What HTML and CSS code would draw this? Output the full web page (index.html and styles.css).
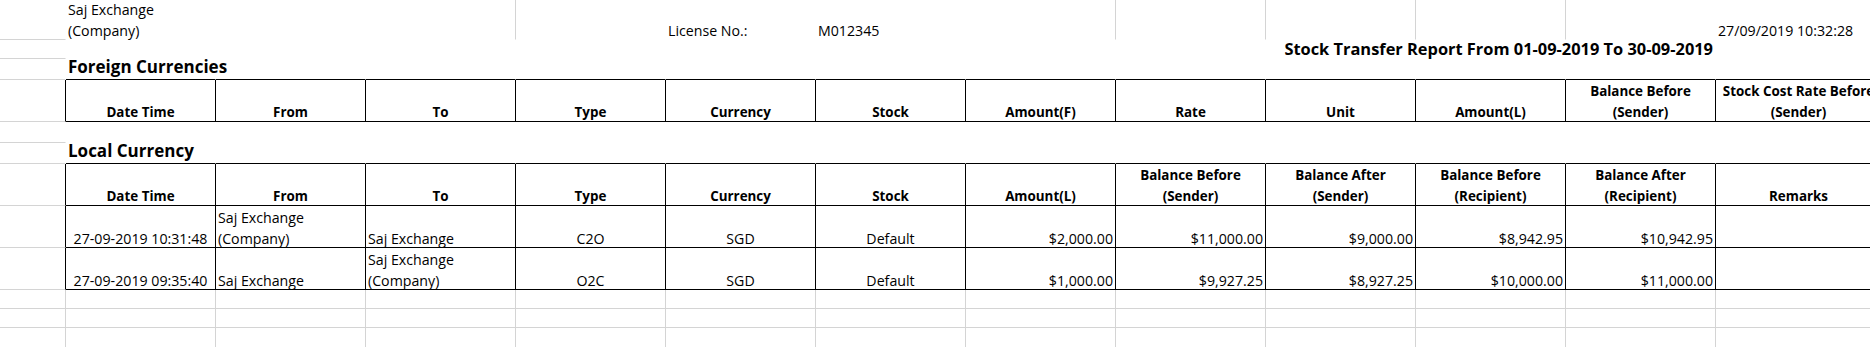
FILE: index.html
```html
<!DOCTYPE html>
<html>
<head>
<meta charset="utf-8">
<link rel="stylesheet" href="styles.css">
</head>
<body>
<div class="sheet">
  <!-- Row 1 -->
  <div class="c gb"></div>
  <div class="c span2"><span class="t">Saj Exchange<br>(Company)</span></div>
  <div class="c gr"></div>
  <div class="c"></div>
  <div class="c"><span class="t">License No.:</span></div>
  <div class="c"><span class="t">M012345</span></div>
  <div class="c gr"></div>
  <div class="c gr"></div>
  <div class="c gr"></div>
  <div class="c gr"></div>
  <div class="c"></div>
  <div class="c"><span class="t">27/09/2019 10:32:28</span></div>

  <!-- Row 2 -->
  <div class="c gb"></div>
  <div class="c"></div><div class="c"></div><div class="c"></div><div class="c"></div><div class="c"></div><div class="c"></div>
  <div class="c span5 rt"><span class="t title">Stock Transfer Report From 01-09-2019 To 30-09-2019</span></div>
  <div class="c"></div>

  <!-- Row 3 -->
  <div class="c gb"></div>
  <div class="c kb"><span class="t section">Foreign Currencies</span></div>
  <div class="c kb"></div><div class="c kb"></div><div class="c kb"></div><div class="c kb"></div><div class="c kb"></div>
  <div class="c kb"></div><div class="c kb"></div><div class="c kb"></div><div class="c kb"></div><div class="c kb"></div><div class="c kb"></div>

  <!-- Row 4 : foreign header -->
  <div class="c gb kr"></div>
  <div class="c h"><span class="t">Date Time</span></div>
  <div class="c h"><span class="t">From</span></div>
  <div class="c h"><span class="t">To</span></div>
  <div class="c h"><span class="t">Type</span></div>
  <div class="c h"><span class="t">Currency</span></div>
  <div class="c h"><span class="t">Stock</span></div>
  <div class="c h"><span class="t">Amount(F)</span></div>
  <div class="c h"><span class="t">Rate</span></div>
  <div class="c h"><span class="t">Unit</span></div>
  <div class="c h"><span class="t">Amount(L)</span></div>
  <div class="c h"><span class="t">Balance Before<br>(Sender)</span></div>
  <div class="c h"><span class="t">Stock Cost Rate Before<br>(Sender)</span></div>

  <!-- Row 5 -->
  <div class="c gb"></div>
  <div class="c"></div><div class="c"></div><div class="c"></div><div class="c"></div><div class="c"></div><div class="c"></div>
  <div class="c"></div><div class="c"></div><div class="c"></div><div class="c"></div><div class="c"></div><div class="c"></div>

  <!-- Row 6 -->
  <div class="c gb"></div>
  <div class="c kb"><span class="t section">Local Currency</span></div>
  <div class="c kb"></div><div class="c kb"></div><div class="c kb"></div><div class="c kb"></div><div class="c kb"></div>
  <div class="c kb"></div><div class="c kb"></div><div class="c kb"></div><div class="c kb"></div><div class="c kb"></div><div class="c kb"></div>

  <!-- Row 7 : local header -->
  <div class="c gb kr"></div>
  <div class="c h"><span class="t">Date Time</span></div>
  <div class="c h"><span class="t">From</span></div>
  <div class="c h"><span class="t">To</span></div>
  <div class="c h"><span class="t">Type</span></div>
  <div class="c h"><span class="t">Currency</span></div>
  <div class="c h"><span class="t">Stock</span></div>
  <div class="c h"><span class="t">Amount(L)</span></div>
  <div class="c h"><span class="t">Balance Before<br>(Sender)</span></div>
  <div class="c h"><span class="t">Balance After<br>(Sender)</span></div>
  <div class="c h"><span class="t">Balance Before<br>(Recipient)</span></div>
  <div class="c h"><span class="t">Balance After<br>(Recipient)</span></div>
  <div class="c h"><span class="t">Remarks</span></div>

  <!-- Row 8 -->
  <div class="c gb kr"></div>
  <div class="c d ctr"><span class="t">27-09-2019 10:31:48</span></div>
  <div class="c d"><span class="t">Saj Exchange<br>(Company)</span></div>
  <div class="c d"><span class="t">Saj Exchange</span></div>
  <div class="c d ctr"><span class="t">C2O</span></div>
  <div class="c d ctr"><span class="t">SGD</span></div>
  <div class="c d ctr"><span class="t">Default</span></div>
  <div class="c d rt"><span class="t">$2,000.00</span></div>
  <div class="c d rt"><span class="t">$11,000.00</span></div>
  <div class="c d rt"><span class="t">$9,000.00</span></div>
  <div class="c d rt"><span class="t">$8,942.95</span></div>
  <div class="c d rt"><span class="t">$10,942.95</span></div>
  <div class="c d"></div>

  <!-- Row 9 -->
  <div class="c gb kr"></div>
  <div class="c d ctr"><span class="t">27-09-2019 09:35:40</span></div>
  <div class="c d"><span class="t">Saj Exchange</span></div>
  <div class="c d"><span class="t">Saj Exchange<br>(Company)</span></div>
  <div class="c d ctr"><span class="t">O2C</span></div>
  <div class="c d ctr"><span class="t">SGD</span></div>
  <div class="c d ctr"><span class="t">Default</span></div>
  <div class="c d rt"><span class="t">$1,000.00</span></div>
  <div class="c d rt"><span class="t">$9,927.25</span></div>
  <div class="c d rt"><span class="t">$8,927.25</span></div>
  <div class="c d rt"><span class="t">$10,000.00</span></div>
  <div class="c d rt"><span class="t">$11,000.00</span></div>
  <div class="c d"></div>

  <!-- Rows 10-12 : empty grid -->
  <div class="c g"></div><div class="c g"></div><div class="c g"></div><div class="c g"></div><div class="c g"></div><div class="c g"></div><div class="c g"></div>
  <div class="c g"></div><div class="c g"></div><div class="c g"></div><div class="c g"></div><div class="c g"></div><div class="c g"></div>
  <div class="c g"></div><div class="c g"></div><div class="c g"></div><div class="c g"></div><div class="c g"></div><div class="c g"></div><div class="c g"></div>
  <div class="c g"></div><div class="c g"></div><div class="c g"></div><div class="c g"></div><div class="c g"></div><div class="c g"></div>
  <div class="c g"></div><div class="c g"></div><div class="c g"></div><div class="c g"></div><div class="c g"></div><div class="c g"></div><div class="c g"></div>
  <div class="c g"></div><div class="c g"></div><div class="c g"></div><div class="c g"></div><div class="c g"></div><div class="c g"></div>
</div>
</body>
</html>
```

FILE: styles.css
```css
html, body {
  margin: 0;
  padding: 0;
  background: #ffffff;
  overflow: hidden;
}

body {
  width: 1870px;
  height: 347px;
  font-family: "Open Sans", "Liberation Sans", sans-serif;
  font-size: 14.2px;
  color: #000000;
}

.sheet {
  display: grid;
  grid-template-columns: 66px repeat(11, 150px) 166px;
  grid-template-rows: 40px 19px 21px 42px 21px 21px 42px 42px 42px 19px 19px 20px;
  width: 1881px;
}

.c {
  box-sizing: border-box;
  border-right: 1px solid transparent;
  border-bottom: 1px solid transparent;
  display: flex;
  align-items: flex-end;
  justify-content: flex-start;
  padding: 0 2px;
  min-width: 0;
  white-space: nowrap;
}

.span2 { grid-column: span 2; }
.span5 { grid-column: span 5; }

.gr { border-right-color: #d4d4d4; }
.gb { border-bottom-color: #d4d4d4; }
.kr { border-right-color: #000000; }
.kb { border-bottom-color: #000000; }

.g {
  border-right-color: #d4d4d4;
  border-bottom-color: #d4d4d4;
}

.h,
.d {
  border-right-color: #000000;
  border-bottom-color: #000000;
}

.h {
  justify-content: center;
  text-align: center;
  font-weight: 700;
  font-size: 13.4px;
}

.ctr { justify-content: center; text-align: center; }
.rt { justify-content: flex-end; text-align: right; }

.t {
  display: block;
  line-height: 21px;
  margin-bottom: -2px;
}

.title {
  font-weight: 700;
  font-size: 16.4px;
  line-height: 19px;
  margin-bottom: 0;
}

.section {
  font-weight: 700;
  font-size: 17px;
  line-height: 21px;
  margin-bottom: 2px;
}
```
